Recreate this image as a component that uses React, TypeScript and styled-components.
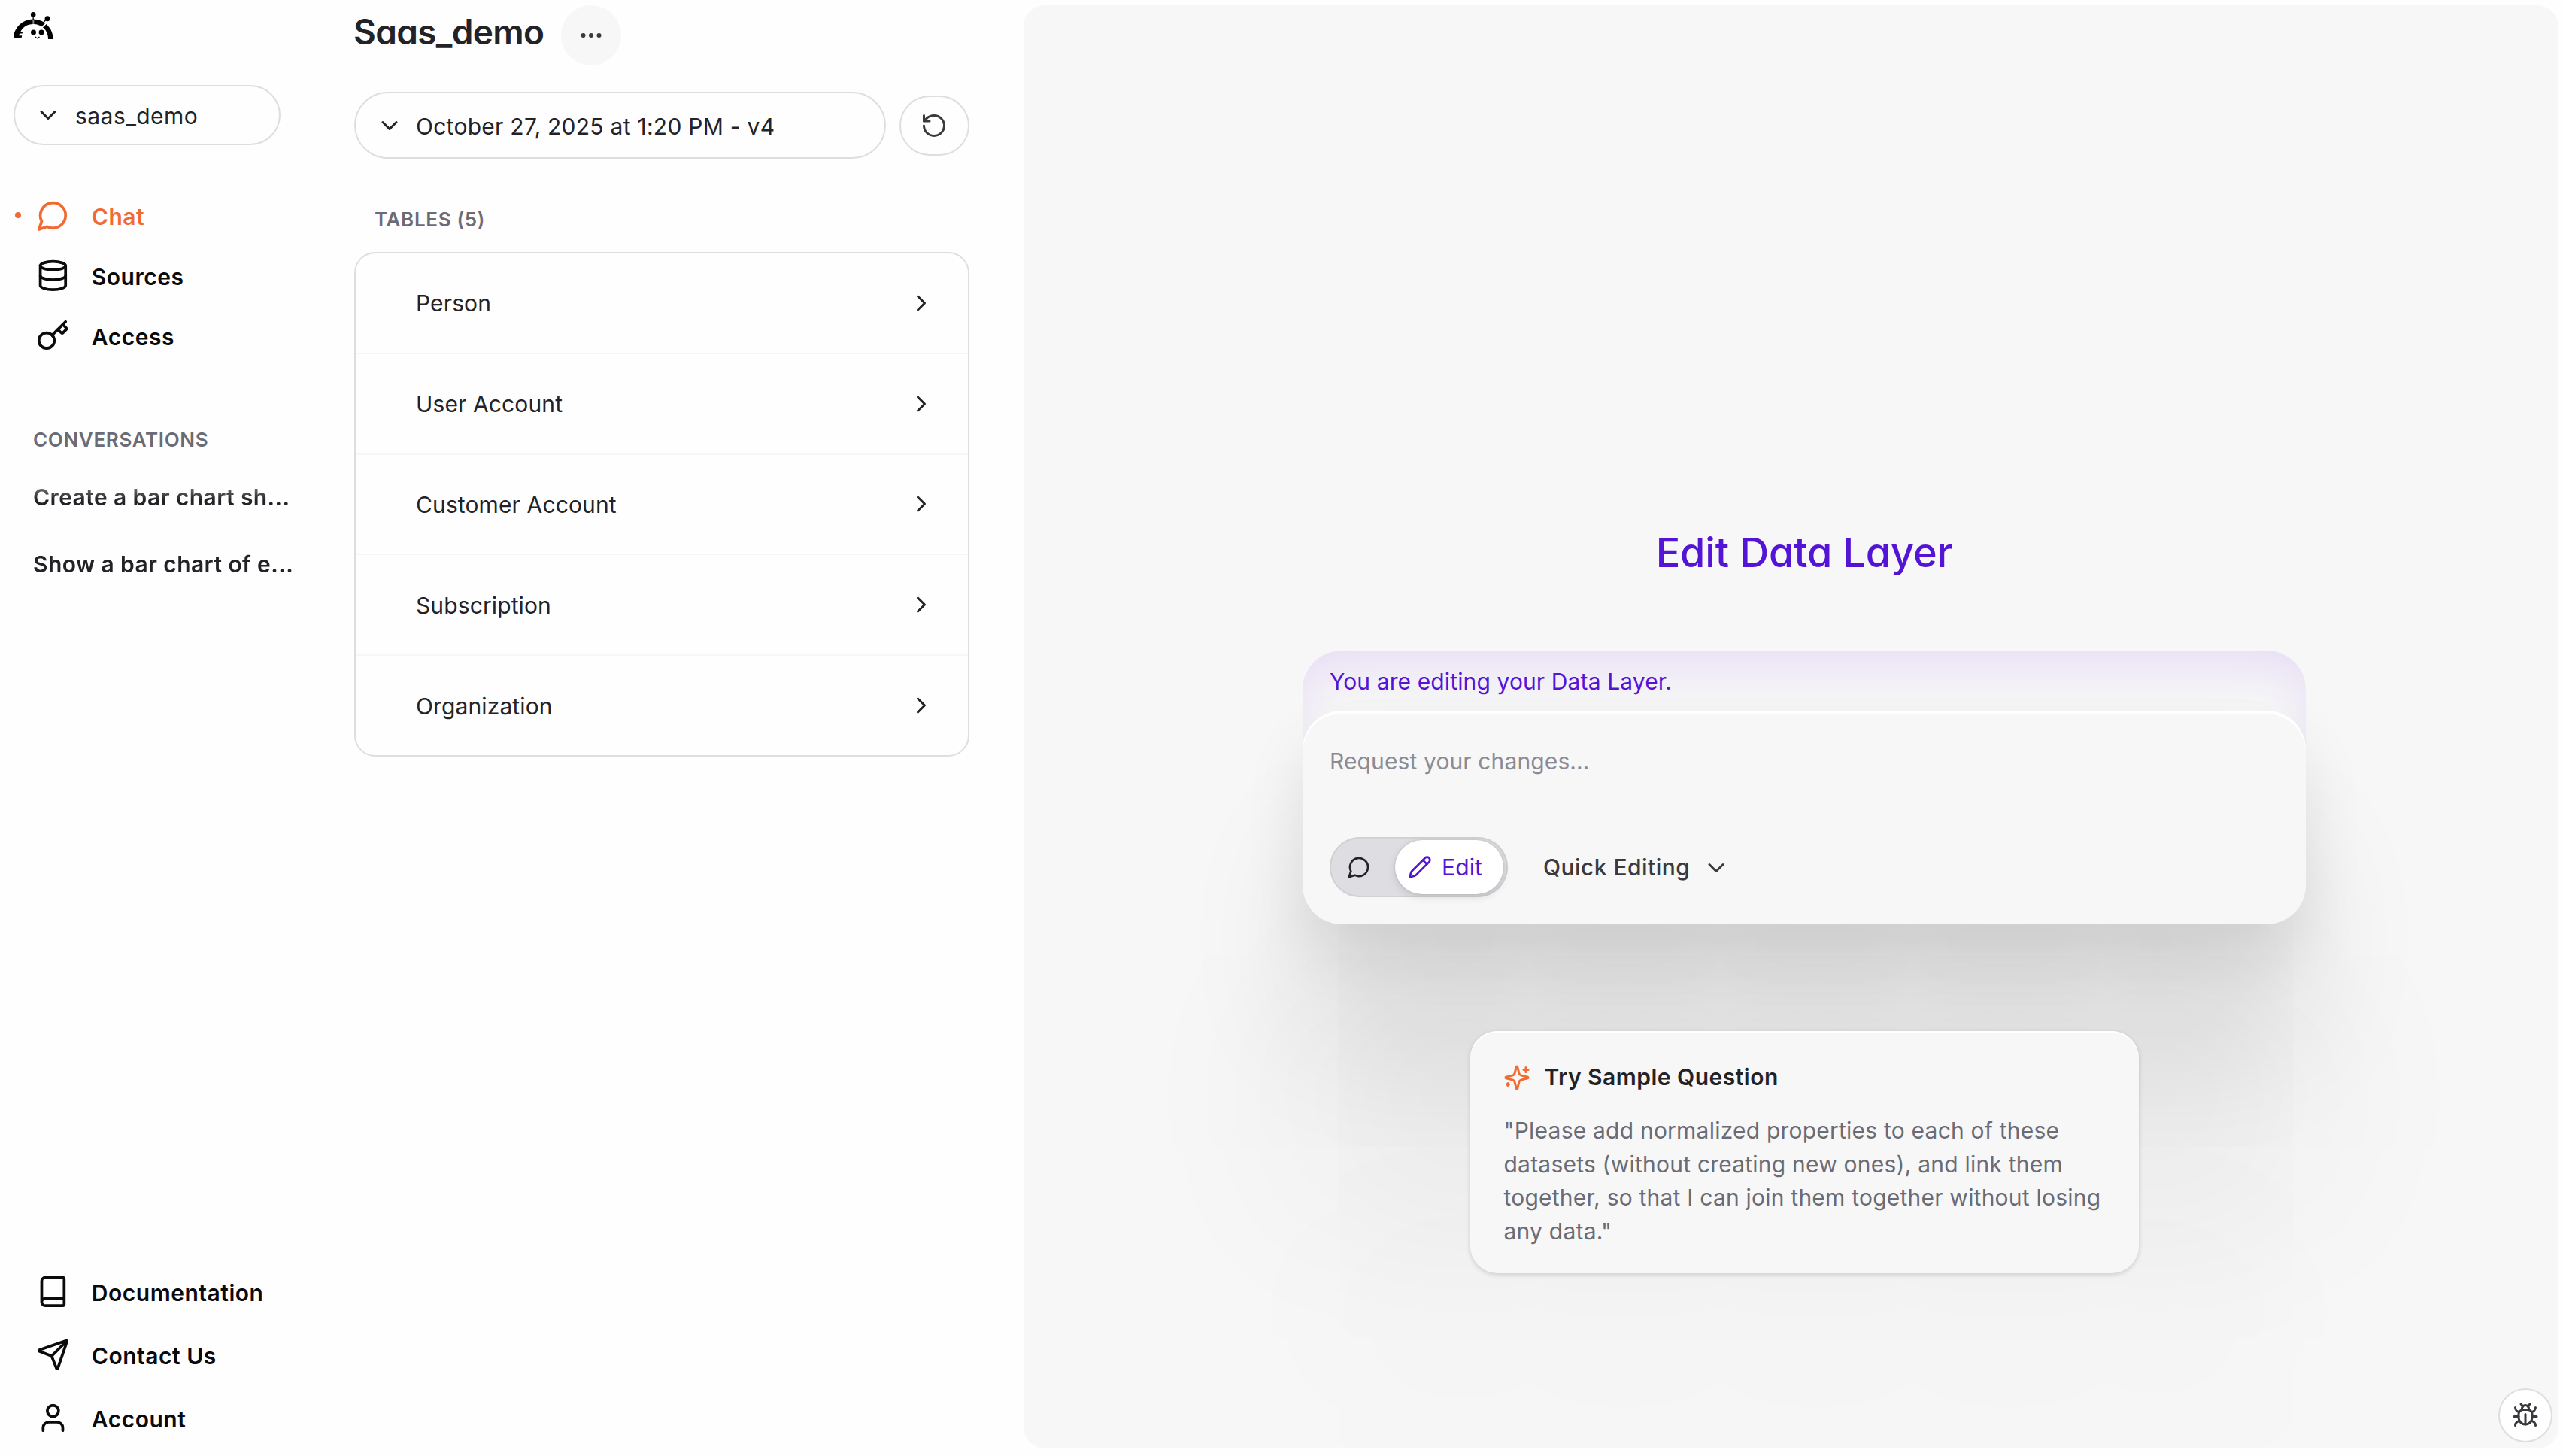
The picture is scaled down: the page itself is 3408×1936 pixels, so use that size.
import React from 'react';
import styled, { createGlobalStyle } from 'styled-components';
import { Book, ChevronDown, ChevronRight, Database, Ellipsis, Key, Pencil, RotateCcw, Send, User } from 'lucide-react';

const GlobalStyle = createGlobalStyle`
  * {
    box-sizing: border-box;
  }

  body {
    margin: 0;
    background: #fefefe;
    color: #232327;
    font-family: Inter, 'Liberation Sans', sans-serif;
    font-size: 30px;
    line-height: 45px;
    letter-spacing: 0.12px;
    -webkit-font-smoothing: antialiased;
  }

  svg {
    display: block;
    flex-shrink: 0;
  }
`;

const Page = styled.div`
  display: flex;
  width: 3408px;
  height: 1936px;
  overflow: hidden;
`;

/* ---------- sidebar ---------- */

const Sidebar = styled.aside`
  display: flex;
  flex-direction: column;
  width: 471px;
  padding: 16px 0 9px 18px;
`;

const WorkspaceSelect = styled.button`
  display: flex;
  align-items: center;
  gap: 18px;
  width: 355px;
  height: 80px;
  margin-top: 61px;
  padding: 0 26px;
  border: 2px solid #dddde2;
  border-radius: 40px;
  background: transparent;
  color: inherit;
  font: inherit;
  letter-spacing: 0.45px;
`;

const Nav = styled.nav<{ $rowHeight: number }>`
  display: grid;
  grid-auto-rows: ${(props) => props.$rowHeight}px;
`;

const MainNav = styled(Nav)`
  margin-top: 53px;
`;

const FooterNav = styled(Nav)`
  margin-top: auto;
`;

const NavItem = styled.a<{ $active?: boolean }>`
  display: flex;
  align-items: center;
  color: ${(props) => (props.$active ? '#f06a32' : '#0b0b0d')};
  font-weight: 600;
  letter-spacing: 0.52px;
`;

const ActiveDot = styled.span<{ $active?: boolean }>`
  width: 8px;
  height: 8px;
  margin: 0 20px 0 2px;
  border-radius: 50%;
  background: ${(props) => (props.$active ? 'currentColor' : 'transparent')};
`;

const NavLabel = styled.span`
  margin-left: 29px;
  padding-top: 4px;
`;

const SectionLabel = styled.h2`
  margin: 0;
  color: #6b6b76;
  font-size: 26px;
  font-weight: 600;
  line-height: 36px;
  letter-spacing: 0.65px;
`;

const ConversationsLabel = styled(SectionLabel)`
  margin: 81px 0 0 26px;
`;

const ConversationList = styled.div`
  display: grid;
  grid-auto-rows: 89px;
  margin-top: 14px;
  padding-left: 26px;
  mask-image: linear-gradient(to bottom, transparent, #000 48px);
`;

const Conversation = styled.a`
  display: flex;
  align-items: center;
  font-weight: 600;
  letter-spacing: 0.4px;
  white-space: nowrap;
`;

/* ---------- tables column ---------- */

const TablesColumn = styled.section`
  display: flex;
  flex-direction: column;
  width: 818px;
  padding-top: 7px;
`;

const TitleRow = styled.header`
  display: flex;
  align-items: center;
  gap: 23px;
  height: 80px;
`;

const Title = styled.h1`
  margin: 0 0 0 -1px;
  padding-bottom: 11px;
  font-size: 46px;
  font-weight: 600;
  line-height: 60px;
  letter-spacing: -0.7px;
  font-feature-settings: 'cv11';
`;

const MoreButton = styled.button`
  display: grid;
  place-items: center;
  width: 80px;
  height: 80px;
  padding: 0;
  border: 0;
  border-radius: 50%;
  background: #f7f7f7;
  color: #39393e;
`;

const VersionRow = styled.div`
  display: flex;
  align-items: center;
  gap: 18px;
  margin-top: 35px;
`;

const VersionSelect = styled.button`
  display: flex;
  flex: 1;
  align-items: center;
  gap: 17px;
  height: 89px;
  padding: 1px 27px 0;
  border: 2px solid #dddde2;
  border-radius: 45px;
  background: transparent;
  color: inherit;
  font: inherit;
  letter-spacing: 0.27px;
`;

const ResetButton = styled.button`
  display: grid;
  place-items: center;
  width: 93px;
  height: 80px;
  padding: 0 1px 0 0;
  border: 2px solid #dddde2;
  border-radius: 40px;
  background: transparent;
  color: #39393e;
`;

const TablesLabel = styled(SectionLabel)`
  margin: 63px 0 0 27px;
`;

const TableList = styled.div`
  display: flex;
  flex-direction: column;
  height: 671px;
  margin-top: 25px;
  border: 2px solid #dddde2;
  border-radius: 28px;
`;

const TableRow = styled.a`
  display: flex;
  flex: 1;
  align-items: center;
  justify-content: space-between;
  padding: 0 44px 0 80px;

  &:not(:last-child) {
    border-bottom: 2px solid #f6f6f7;
  }
`;

const Text = styled.span`
  padding-top: 2px;
`;

/* ---------- chat panel ---------- */

const ChatPanel = styled.main`
  position: relative;
  display: flex;
  flex-direction: column;
  align-items: center;
  width: 2041px;
  height: 1919px;
  margin: 7px 0 0 72px;
  padding: 693px 0 0 35px;
  overflow: hidden;
  border-radius: 28px;
  background: #f7f7f7;
`;

const ChatTitle = styled.h1`
  margin: 0 0 95px;
  color: #5414d6;
  font-size: 54px;
  font-weight: 500;
  line-height: 70px;
  letter-spacing: -0.15px;
  font-feature-settings: 'cv11';
`;

const Composer = styled.div`
  width: 1334px;
`;

const Banner = styled.div`
  height: 150px;
  margin-bottom: -70px;
  padding: 19px 36px;
  border-radius: 52px 52px 0 0;
  box-shadow: inset 0 34px 60px -8px rgba(110, 20, 240, 0.1);
  color: #5414d6;
`;

const ComposerCard = styled.div`
  position: relative;
  display: flex;
  flex-direction: column;
  justify-content: space-between;
  height: 284px;
  padding: 45px 36px 36px;
  border-radius: 52px;
  background: #f7f7f7;
  box-shadow:
    inset 0 4px 0 #fff,
    0 38px 84px rgba(0, 0, 0, 0.09),
    0 164px 170px rgba(0, 0, 0, 0.09),
    0 370px 310px rgba(0, 0, 0, 0.07),
    0 656px 340px rgba(0, 0, 0, 0.015);
`;

const Placeholder = styled.div`
  color: #8b8b95;
`;

const ComposerTools = styled.div`
  display: flex;
  align-items: center;
`;

const ModeToggle = styled.div`
  display: flex;
  align-items: center;
  justify-content: space-between;
  width: 237px;
  height: 80px;
  padding: 0 6px 0 23px;
  border-radius: 40px;
  background: #dedde2;
  box-shadow: inset 0 0 0 2px #d1d1d4;
`;

const ModeThumb = styled.div`
  display: flex;
  align-items: center;
  gap: 13px;
  width: 144px;
  height: 72px;
  padding-left: 17px;
  border-radius: 36px;
  background: #fff;
  box-shadow:
    0 0 3px rgba(0, 0, 0, 0.14),
    0 4px 12px rgba(0, 0, 0, 0.12);
  color: #5414d6;
`;

const EffortSelect = styled.button`
  display: flex;
  align-items: center;
  gap: 17px;
  margin-left: 47px;
  padding: 1px 0 0;
  border: 0;
  background: transparent;
  color: #39393e;
  font: inherit;
  font-weight: 500;
  letter-spacing: 0.45px;
`;

const SampleCard = styled.div`
  position: relative;
  width: 889px;
  height: 322px;
  margin-top: 142px;
  padding: 39px 45px;
  border-radius: 36px;
  background: #f7f7f7;
  box-shadow:
    inset 0 2px 0 #fff,
    0 2px 6px rgba(0, 0, 0, 0.16);
`;

const SampleHeader = styled.div`
  display: flex;
  align-items: center;
  gap: 19px;
  margin-left: -1px;
  font-weight: 600;
  letter-spacing: 0.48px;
`;

const SampleText = styled.p`
  margin: 26px 0 0;
  color: #6b6b76;
  line-height: 44.5px;
  letter-spacing: 0.22px;
  white-space: nowrap;
`;

const BugButton = styled.button`
  position: absolute;
  right: 8px;
  bottom: 8px;
  display: grid;
  place-items: center;
  width: 72px;
  height: 72px;
  padding: 0;
  border: 2px solid #dddde2;
  border-radius: 50%;
  background: #fff;
  color: #39393e;
`;

/* ---------- icons ---------- */

const Icon: React.FC<{ size: number; color?: string; children: React.ReactNode }> = ({
  size,
  color = 'currentColor',
  children,
}) => (
  <svg
    width={size}
    height={size}
    viewBox="0 0 24 24"
    fill="none"
    stroke={color}
    strokeWidth="2"
    strokeLinecap="round"
    strokeLinejoin="round"
  >
    {children}
  </svg>
);

const ChatIcon: React.FC<{ size?: number }> = ({ size = 44.8 }) => (
  <Icon size={size}>
    <path d="M7.9 20A9 9 0 1 0 4 16.1L2 22Z" />
  </Icon>
);

const SparklesIcon = () => (
  <Icon size={36} color="#f06a32">
    <path d="M9.937 15.5A2 2 0 0 0 8.5 14.063l-6.135-1.582a.5.5 0 0 1 0-.962L8.5 9.936A2 2 0 0 0 9.937 8.5l1.582-6.135a.5.5 0 0 1 .963 0L14.063 8.5A2 2 0 0 0 15.5 9.937l6.135 1.581a.5.5 0 0 1 0 .964L15.5 14.063a2 2 0 0 0-1.437 1.437l-1.582 6.135a.5.5 0 0 1-.963 0z" />
    <path d="M20 3v4" />
    <path d="M22 5h-4" />
    <path d="M4 17v2" />
    <path d="M5 18H3" />
  </Icon>
);

const BugIcon = () => (
  <Icon size={36}>
    <path d="m8 2 1.88 1.88" />
    <path d="M14.12 3.88 16 2" />
    <path d="M9 7.13v-1a3.003 3.003 0 1 1 6 0v1" />
    <path d="M12 20c-3.3 0-6-2.7-6-6v-3a4 4 0 0 1 4-4h4a4 4 0 0 1 4 4v3c0 3.3-2.7 6-6 6" />
    <path d="M12 20v-9" />
    <path d="M6.53 9C4.6 8.8 3 7.1 3 5" />
    <path d="M6 13H2" />
    <path d="M3 21c0-2.1 1.7-3.9 3.8-4" />
    <path d="M20.97 5c0 2.1-1.6 3.8-3.5 4" />
    <path d="M22 13h-4" />
    <path d="M17.2 17c2.1.1 3.8 1.9 3.8 4" />
  </Icon>
);

const Logo = () => (
  <svg width="53" height="36" viewBox="0 0 160 108" fill="none">
    <path
      d="M0 102C2 62 36 28 79 28s80 34 80 80h-20c0-36-26-60-60-60-24 0-42 12-51 31h9l-2 7H24l-2 8h12l-2 8z"
      fill="#000"
    />
    <path d="M82 26v24" stroke="#fff" strokeWidth="9" />
    <path d="M136 40 112 63" stroke="#fff" strokeWidth="6" />
    <path d="M79 12v18M82 28v20M134 27l-24 24" stroke="#000" strokeWidth="4" />
    <circle cx="79" cy="10" r="10" fill="#000" />
    <circle cx="136" cy="26" r="10.5" fill="#000" />
    <circle cx="80" cy="81" r="10.5" fill="#000" />
    <circle cx="112" cy="81" r="10.5" fill="#000" />
    <path d="M87 99q9 11 17 0" stroke="#000" strokeWidth="4" />
  </svg>
);

const mainNav = [
  { label: 'Chat', icon: <ChatIcon />, active: true },
  { label: 'Sources', icon: <Database size={44.8} /> },
  { label: 'Access', icon: <Key size={44.8} /> },
];

const footerNav = [
  { label: 'Documentation', icon: <Book size={44.8} /> },
  { label: 'Contact Us', icon: <Send size={44.8} /> },
  { label: 'Account', icon: <User size={44.8} /> },
];

const conversations = ['Create a bar chart sh...', 'Show a bar chart of e...'];

const tables = ['Person', 'User Account', 'Customer Account', 'Subscription', 'Organization'];

const App: React.FC = () => {
  return (
    <>
      <GlobalStyle />
      <Page>
        <Sidebar>
          <Logo />
          <WorkspaceSelect>
            <ChevronDown size={36} />
            <Text>saas_demo</Text>
          </WorkspaceSelect>
          <MainNav $rowHeight={80}>
            {mainNav.map((item) => (
              <NavItem key={item.label} $active={item.active}>
                <ActiveDot $active={item.active} />
                {item.icon}
                <NavLabel>{item.label}</NavLabel>
              </NavItem>
            ))}
          </MainNav>
          <ConversationsLabel>CONVERSATIONS</ConversationsLabel>
          <ConversationList>
            {conversations.map((name) => (
              <Conversation key={name}>{name}</Conversation>
            ))}
          </ConversationList>
          <FooterNav $rowHeight={84}>
            {footerNav.map((item) => (
              <NavItem key={item.label}>
                <ActiveDot />
                {item.icon}
                <NavLabel>{item.label}</NavLabel>
              </NavItem>
            ))}
          </FooterNav>
        </Sidebar>

        <TablesColumn>
          <TitleRow>
            <Title>Saas_demo</Title>
            <MoreButton>
              <Ellipsis size={36} />
            </MoreButton>
          </TitleRow>
          <VersionRow>
            <VersionSelect>
              <ChevronDown size={36} />
              <Text>October 27, 2025 at 1:20 PM - v4</Text>
            </VersionSelect>
            <ResetButton>
              <RotateCcw size={36} />
            </ResetButton>
          </VersionRow>
          <TablesLabel>TABLES (5)</TablesLabel>
          <TableList>
            {tables.map((name) => (
              <TableRow key={name}>
                <Text>{name}</Text>
                <ChevronRight size={36} />
              </TableRow>
            ))}
          </TableList>
        </TablesColumn>

        <ChatPanel>
          <ChatTitle>Edit Data Layer</ChatTitle>
          <Composer>
            <Banner>You are editing your Data Layer.</Banner>
            <ComposerCard>
              <Placeholder>Request your changes...</Placeholder>
              <ComposerTools>
                <ModeToggle>
                  <ChatIcon size={32} />
                  <ModeThumb>
                    <Pencil size={32} />
                    <span>Edit</span>
                  </ModeThumb>
                </ModeToggle>
                <EffortSelect>
                  Quick Editing
                  <ChevronDown size={36} />
                </EffortSelect>
              </ComposerTools>
            </ComposerCard>
          </Composer>
          <SampleCard>
            <SampleHeader>
              <SparklesIcon />
              <span>Try Sample Question</span>
            </SampleHeader>
            <SampleText>
              "Please add normalized properties to each of these
              <br />
              datasets (without creating new ones), and link them
              <br />
              together, so that I can join them together without losing
              <br />
              any data."
            </SampleText>
          </SampleCard>
          <BugButton>
            <BugIcon />
          </BugButton>
        </ChatPanel>
      </Page>
    </>
  );
};

export default App;
